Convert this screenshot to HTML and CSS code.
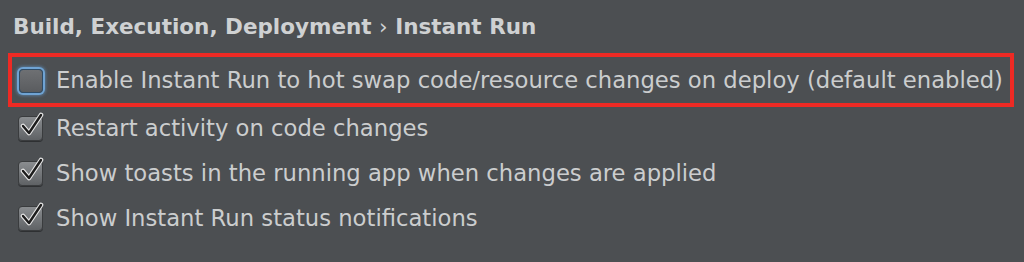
FILE: index.html
```html
<!DOCTYPE html>
<html>
<head>
    <title>Instant Run</title>
    <link rel="stylesheet" href="styles.css">
</head>
<body>
    <div class="panel">
        <h1 class="crumbs">Build, Execution, Deployment <span class="sep">›</span> Instant Run</h1>

        <div class="highlight">
            <label class="option">
                <span class="box box-focus"></span>
                <span class="text">Enable Instant Run to hot swap code/resource changes on deploy (default enabled)</span>
            </label>
        </div>

        <div class="sub">
            <label class="option">
                <span class="box">
                    <svg viewBox="0 0 26 26" width="26" height="26"><path d="M5 15 L11 22 L23 4" fill="none" stroke="#e8e8e8" stroke-width="4.6" stroke-linecap="round" stroke-linejoin="round"/><path d="M5 15 L11 22 L23 4" fill="none" stroke="#1c1c1c" stroke-width="2.4" stroke-linecap="round" stroke-linejoin="round"/></svg>
                </span>
                <span class="text">Restart activity on code changes</span>
            </label>
            <label class="option">
                <span class="box">
                    <svg viewBox="0 0 26 26" width="26" height="26"><path d="M5 15 L11 22 L23 4" fill="none" stroke="#e8e8e8" stroke-width="4.6" stroke-linecap="round" stroke-linejoin="round"/><path d="M5 15 L11 22 L23 4" fill="none" stroke="#1c1c1c" stroke-width="2.4" stroke-linecap="round" stroke-linejoin="round"/></svg>
                </span>
                <span class="text">Show toasts in the running app when changes are applied</span>
            </label>
            <label class="option">
                <span class="box">
                    <svg viewBox="0 0 26 26" width="26" height="26"><path d="M5 15 L11 22 L23 4" fill="none" stroke="#e8e8e8" stroke-width="4.6" stroke-linecap="round" stroke-linejoin="round"/><path d="M5 15 L11 22 L23 4" fill="none" stroke="#1c1c1c" stroke-width="2.4" stroke-linecap="round" stroke-linejoin="round"/></svg>
                </span>
                <span class="text">Show Instant Run status notifications</span>
            </label>
        </div>
    </div>
</body>
</html>
```

FILE: styles.css
```css
html, body {
    margin: 0;
    height: 100%;
    background-color: #4c4f52;
}

.panel {
    padding: 14px 8px 0 8px;
    font-family: "DejaVu Sans", "Liberation Sans", sans-serif;
    color: #cbcdce;
}

.crumbs {
    margin: 0 0 0 5px;
    font-size: 21.5px;
    font-weight: bold;
    line-height: 26px;
    color: #cfd1d2;
}

.crumbs .sep {
    font-weight: normal;
}

.highlight {
    margin-top: 13px;
    border: 4px solid #ee2a24;
    height: 46px;
    width: 998px;
    box-sizing: content-box;
    display: flex;
    align-items: center;
    padding-top: 1px;
    box-sizing: border-box;
    height: 54px;
    width: 1006px;
}

.sub {
    display: flex;
    flex-direction: column;
    gap: 20px;
    margin-top: 9px;
}

.option {
    display: flex;
    align-items: center;
    gap: 13px;
    font-size: 22.7px;
    line-height: 25px;
    padding-left: 10px;
}

.highlight .option {
    padding-left: 7px;
}

.box {
    width: 23px;
    height: 23px;
    border-radius: 4px;
    background: linear-gradient(#8a8d90, #5f6265);
    border: 1px solid #3a3c3e;
    box-shadow: 0 1px 0 #2e3032;
    position: relative;
    flex: none;
}

.box svg {
    position: absolute;
    left: -1px;
    top: -6px;
}

.box-focus {
    width: 22px;
    height: 22px;
    background: linear-gradient(#6e7073, #5a5c5f);
    border: 1px solid #2f4c66;
    box-shadow: 0 0 0 2px #6fa3d3, 0 0 3px 3px rgba(100, 160, 215, 0.5);
}
```
